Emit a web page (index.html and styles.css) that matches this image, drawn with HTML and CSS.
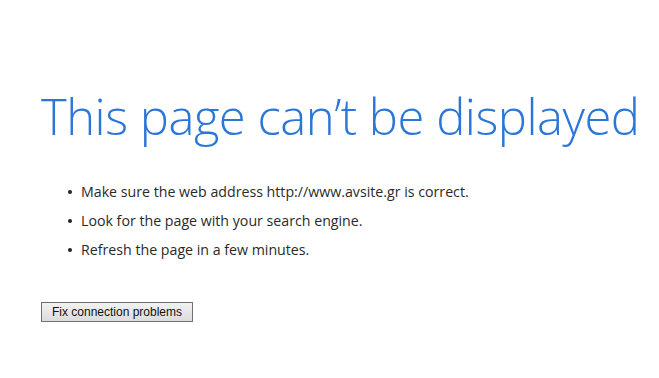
FILE: index.html
```html
<!DOCTYPE html>
<html lang="en">
<head>
    <meta charset="UTF-8">
    <title>This page can't be displayed</title>
    <link rel="stylesheet" href="styles.css">
</head>
<body>
    <div class="container">
        <h1 class="title">This page can’t be displayed</h1>
        <ul class="tips">
            <li>Make sure the web address http://www.avsite.gr is correct.</li>
            <li>Look for the page with your search engine.</li>
            <li>Refresh the page in a few minutes.</li>
        </ul>
        <button type="button" class="fix-btn">Fix connection problems</button>
    </div>
</body>
</html>
```

FILE: styles.css
```css
body {
    margin: 0;
    background: #fff;
    font-family: "Open Sans", "Noto Sans", sans-serif;
}

.container {
    padding: 80px 0 0 41px;
}

.title {
    margin: 0;
    font-weight: 300;
    font-size: 49px;
    line-height: 72px;
    letter-spacing: -0.5px;
    color: #2b76d9;
    white-space: nowrap;
}

.tips {
    margin: 25px 0 0;
    padding: 0 0 0 40px;
    list-style: none;
}

.tips li {
    position: relative;
    font-size: 14.2px;
    line-height: 29px;
    color: #2a2a2a;
}

.tips li::before {
    content: "";
    position: absolute;
    left: -13px;
    top: 13px;
    width: 4px;
    height: 4px;
    border-radius: 50%;
    background: #222;
}

.fix-btn {
    margin-top: 38px;
    width: 152px;
    height: 20px;
    padding: 0;
    font-family: Arial, "Liberation Sans", sans-serif;
    font-size: 12px;
    color: #111;
    background: linear-gradient(#f2f2f2, #dcdcdc);
    border: 1px solid #707070;
    border-radius: 0;
}
```
